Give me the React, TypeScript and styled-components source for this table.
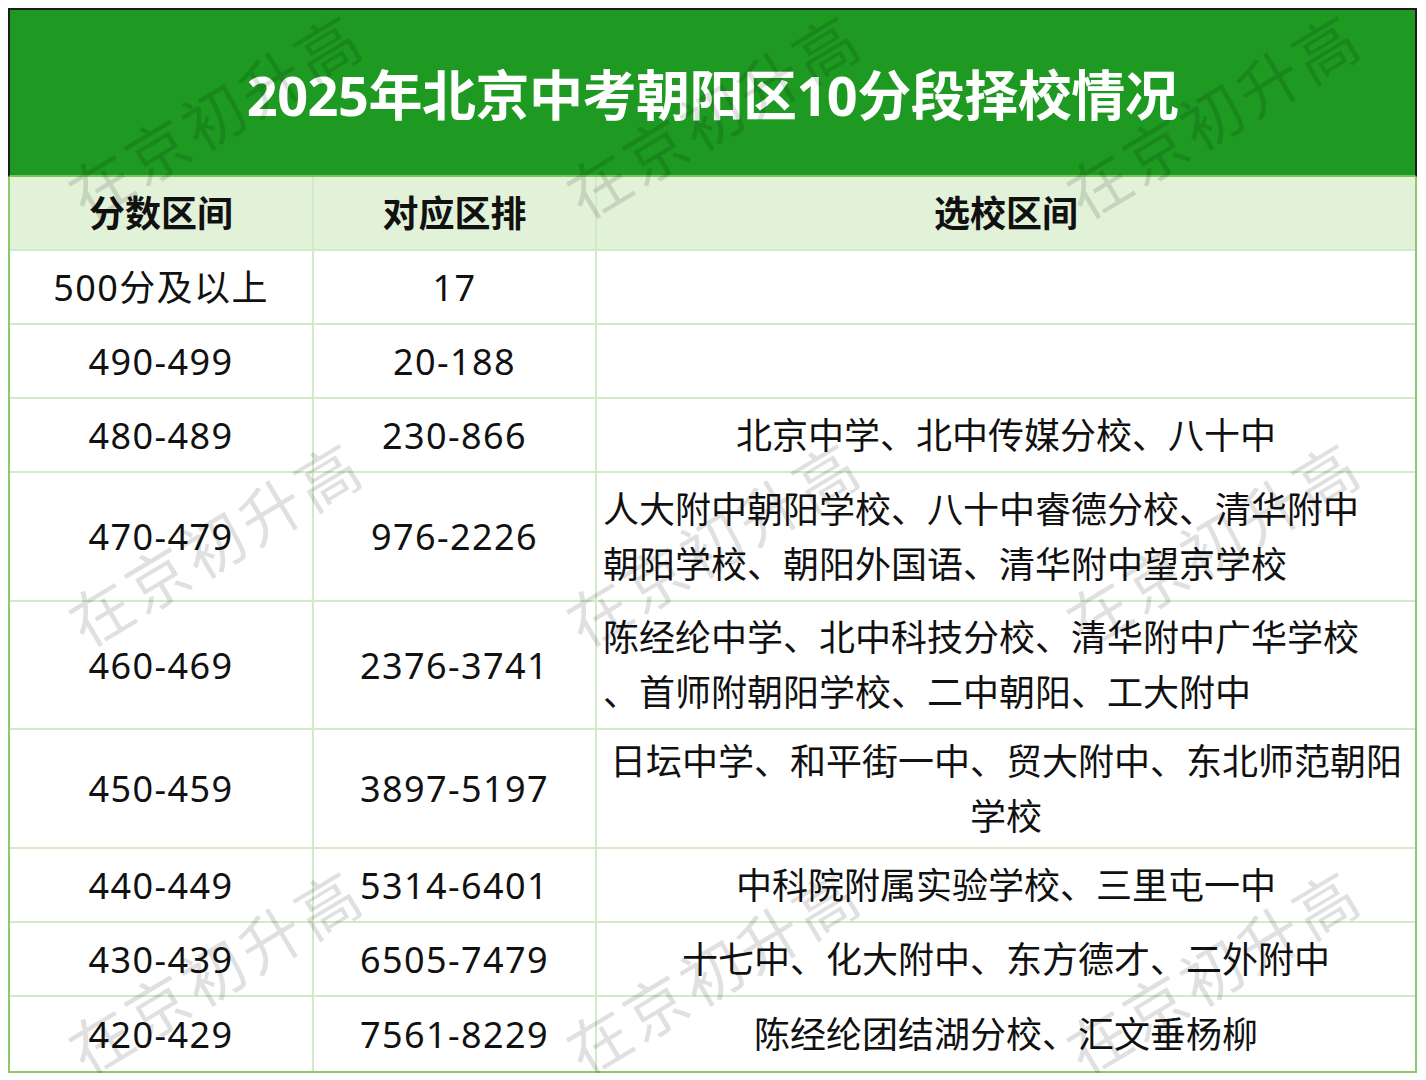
import styled, { createGlobalStyle } from "styled-components";

const GlobalStyle = createGlobalStyle`
  html, body {
    margin: 0;
    padding: 0;
    background: #ffffff;
  }
  * {
    box-sizing: border-box;
  }
`;

const Page = styled.div`
  padding: 8px;
  font-family: "Noto Sans", "Noto Sans CJK SC", sans-serif;
`;

const Sheet = styled.div`
  position: relative;
  width: 1409px;
  overflow: hidden;
`;

const TitleBar = styled.div`
  height: 169px;
  background: #1e9a22;
  border: 2px solid #1c1c1c;
  border-bottom: 2px solid #7cc35a;
  display: flex;
  align-items: center;
  justify-content: center;
`;

const Title = styled.h1`
  margin: 0;
  font-size: 54px;
  font-weight: 700;
  color: #ffffff;
  letter-spacing: -0.5px;
`;

const Body = styled.div`
  border-left: 2px solid #8cc96c;
  border-right: 2px solid #8cc96c;
  border-bottom: 2px solid #8cc96c;
`;

const Row = styled.div<{ $h: number; $head?: boolean }>`
  display: grid;
  grid-template-columns: 302px 283px 1fr;
  height: ${({ $h }) => $h}px;
  background: ${({ $head }) => ($head ? "#e2f2d9" : "#ffffff")};
  border-bottom: 2px solid #d2eac5;

  &:last-child {
    border-bottom: none;
  }
`;

const Cell = styled.div<{ $head?: boolean; $num?: boolean; $align?: "left" | "center" }>`
  display: flex;
  flex-direction: column;
  justify-content: center;
  align-items: ${({ $align }) => ($align === "left" ? "flex-start" : "center")};
  padding: 0 6px;
  font-size: 36px;
  line-height: 55px;
  font-weight: ${({ $head }) => ($head ? 700 : 400)};
  letter-spacing: ${({ $num }) => ($num ? "1.4px" : "0")};
  color: #111111;
  white-space: nowrap;

  & + & {
    border-left: 2px solid ${({ $head }) => ($head ? "#ffffff" : "#d2eac5")};
  }
`;

const Line = styled.span`
  display: block;
`;

const Watermark = styled.div<{ $x: number; $y: number }>`
  position: absolute;
  left: ${({ $x }) => $x}px;
  top: ${({ $y }) => $y}px;
  transform: translate(-50%, -50%) rotate(-31deg);
  font-family: "Noto Sans CJK SC", sans-serif;
  font-size: 62px;
  line-height: 1;
  font-weight: 400;
  letter-spacing: 4px;
  color: rgba(0, 0, 0, 0.12);
  white-space: nowrap;
  pointer-events: none;
`;

type Item = {
  score: string;
  rank: string;
  schools: string[];
  h: number;
  align?: "left" | "center";
};

const rows: Item[] = [
  { score: "500分及以上", rank: "17", schools: [], h: 74 },
  { score: "490-499", rank: "20-188", schools: [], h: 74 },
  { score: "480-489", rank: "230-866", schools: ["北京中学、北中传媒分校、八十中"], h: 74 },
  {
    score: "470-479",
    rank: "976-2226",
    schools: ["人大附中朝阳学校、八十中睿德分校、清华附中", "朝阳学校、朝阳外国语、清华附中望京学校"],
    h: 129,
    align: "left",
  },
  {
    score: "460-469",
    rank: "2376-3741",
    schools: ["陈经纶中学、北中科技分校、清华附中广华学校", "、首师附朝阳学校、二中朝阳、工大附中"],
    h: 128,
    align: "left",
  },
  {
    score: "450-459",
    rank: "3897-5197",
    schools: ["日坛中学、和平街一中、贸大附中、东北师范朝阳", "学校"],
    h: 119,
  },
  { score: "440-449", rank: "5314-6401", schools: ["中科院附属实验学校、三里屯一中"], h: 74 },
  { score: "430-439", rank: "6505-7479", schools: ["十七中、化大附中、东方德才、二外附中"], h: 74 },
  { score: "420-429", rank: "7561-8229", schools: ["陈经纶团结湖分校、汇文垂杨柳"], h: 74 },
];

// watermark centres in page pixels, shifted into the sheet
const marks = [113, 541, 969].flatMap((y) => [214, 712, 1212].map((x) => ({ x: x - 8, y: y - 8 })));

export default function App() {
  return (
    <Page>
      <GlobalStyle />
      <Sheet>
        <TitleBar>
          <Title>2025年北京中考朝阳区10分段择校情况</Title>
        </TitleBar>
        <Body>
          <Row $h={74} $head>
            <Cell $head>分数区间</Cell>
            <Cell $head>对应区排</Cell>
            <Cell $head>选校区间</Cell>
          </Row>
          {rows.map((r) => (
            <Row key={r.score} $h={r.h}>
              <Cell $num>{r.score}</Cell>
              <Cell $num>{r.rank}</Cell>
              <Cell $align={r.align}>
                {r.schools.map((s) => (
                  <Line key={s}>{s}</Line>
                ))}
              </Cell>
            </Row>
          ))}
        </Body>
        {marks.map((m, i) => (
          <Watermark key={i} $x={m.x} $y={m.y}>
            在京初升高
          </Watermark>
        ))}
      </Sheet>
    </Page>
  );
}
